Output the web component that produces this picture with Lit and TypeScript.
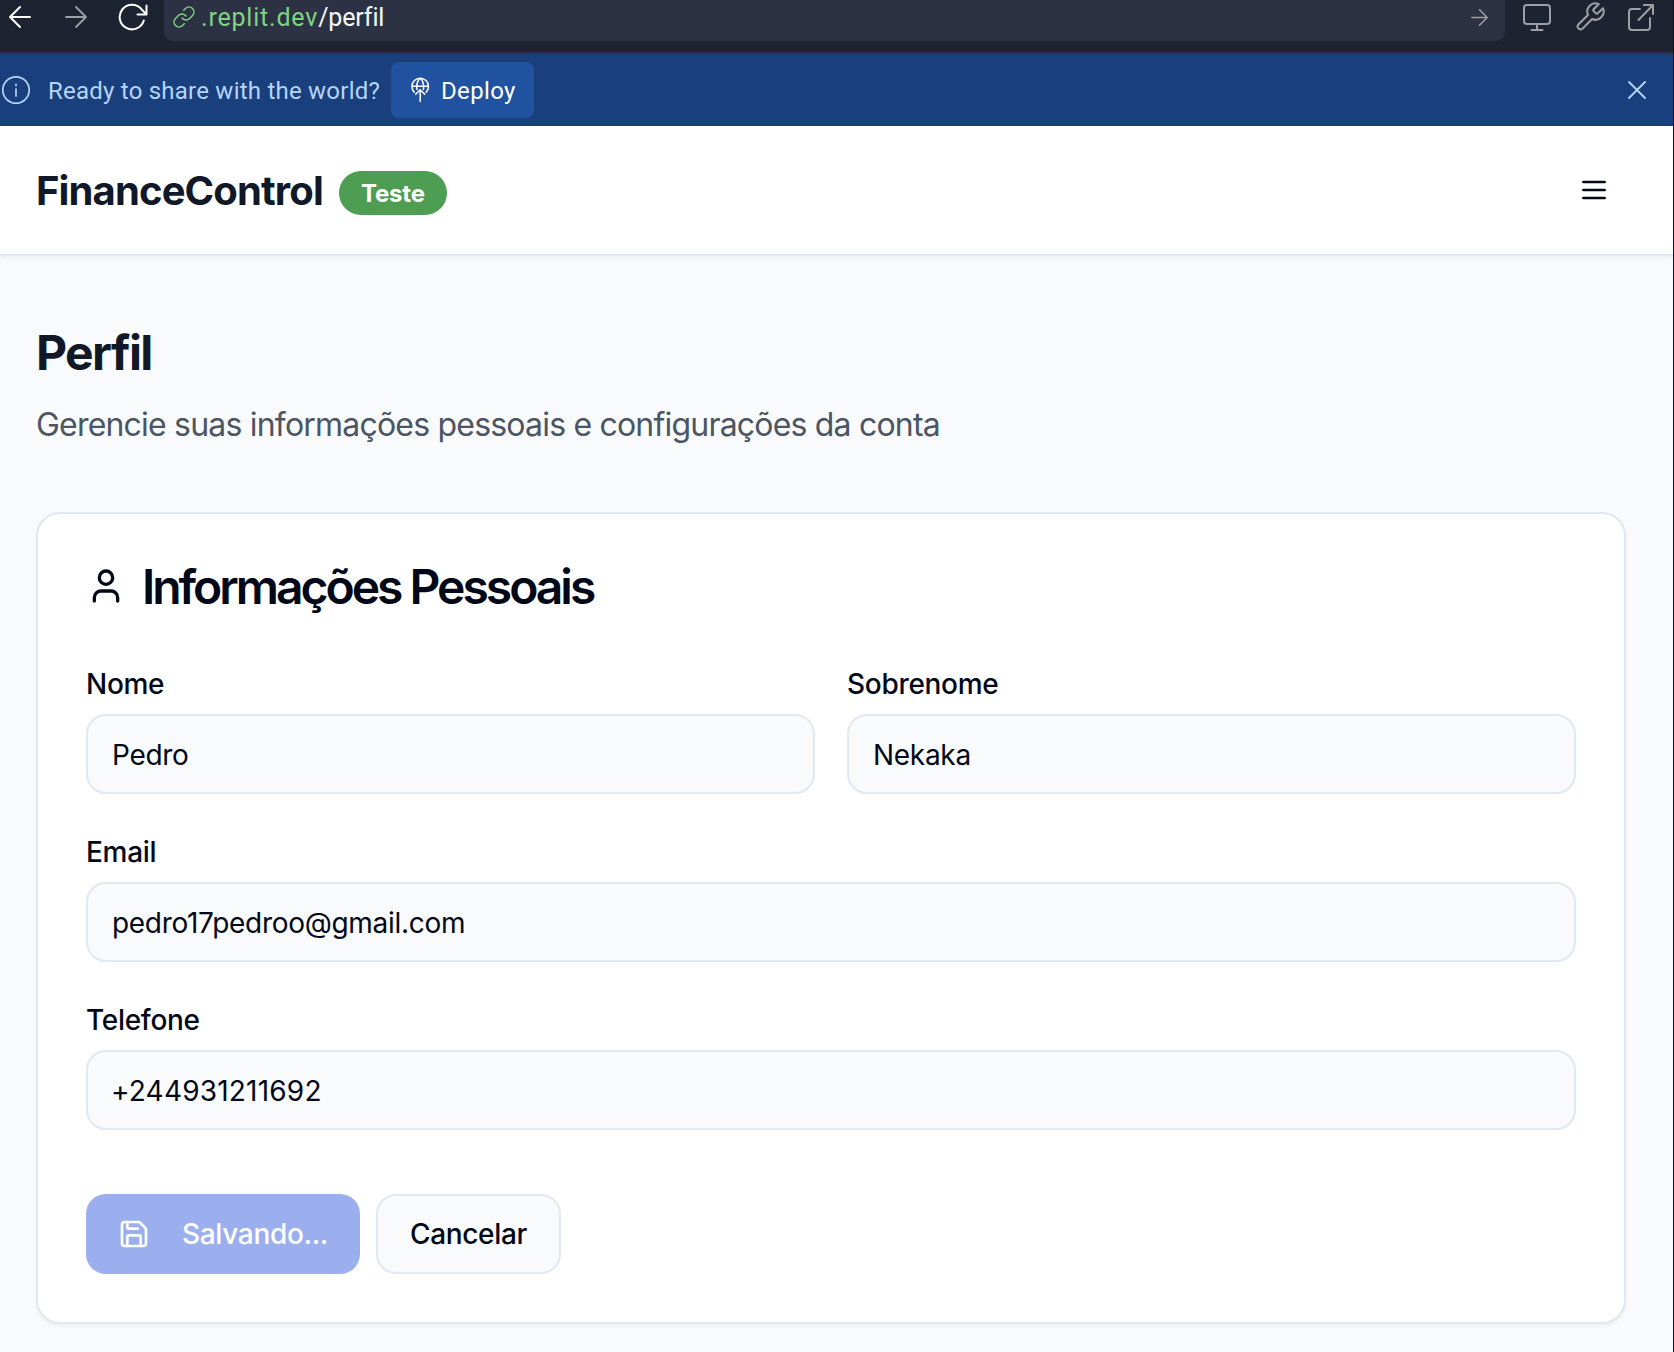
import { LitElement, html, css, svg } from "lit";
import { customElement, property } from "lit/decorators.js";

const icons: Record<string, unknown> = {
  back: svg`<path d="M22 12H2M12 2 2 12l10 10"/>`,
  forward: svg`<path d="M2 12h20M12 2l10 10-10 10"/>`,
  reload: svg`<path d="M25.8 18.500A12.300 12.300 0 1 1 23.500 7.200L28.500 12.500M28.500 3.500v9h-9"/>`,
  link: svg`<path d="M10 13a5 5 0 0 0 7.54.54l3-3a5 5 0 0 0-7.07-7.07l-1.72 1.71"/><path d="M14 11a5 5 0 0 0-7.54-.54l-3 3a5 5 0 0 0 7.07 7.07l1.71-1.71"/>`,
  monitor: svg`<rect x="1" y="2" width="26" height="19" rx="3"/><path d="M14 21v6M8.500 27h11"/>`,
  wrench: svg`<path d="M14.7 6.3a1 1 0 0 0 0 1.4l1.6 1.6a1 1 0 0 0 1.4 0l3.77-3.77a6 6 0 0 1-7.94 7.94l-6.91 6.91a2.12 2.12 0 0 1-3-3l6.91-6.91a6 6 0 0 1 7.94-7.94l-3.76 3.76z"/>`,
  external: svg`<path d="M13 6H5a3 3 0 0 0-3 3v15a3 3 0 0 0 3 3h15a3 3 0 0 0 3-3v-9M11.500 17 26 2M17 2h9v9"/>`,
  info: svg`<circle cx="14" cy="14" r="13.2"/><path d="M14 13v7"/><path d="M14 8.4v1.2"/>`,
  deploy: svg`<path d="M3.200 15.200A8.300 8.300 0 1 1 15.200 15.200M1 9.300h16.500M6 12.500C5.200 7.500 6.800 3.500 9.200 1C11.600 3.500 13.200 7.500 12.400 12.500M9.200 24.500V12.700M4.700 17.200l4.500-4.500 4.500 4.500"/>`,
  close: svg`<path d="M1 1 17 17M17 1 1 17"/>`,
  menu: svg`<path d="M4 6h16M4 12h16M4 18h16"/>`,
  user: svg`<path d="M19 21v-2a4 4 0 0 0-4-4H9a4 4 0 0 0-4 4v2"/><circle cx="12" cy="7" r="4"/>`,
  save: svg`<path d="M15.2 3a2 2 0 0 1 1.400.6l3.800 3.800a2 2 0 0 1 .6 1.400V19a2 2 0 0 1-2 2H5a2 2 0 0 1-2-2V5a2 2 0 0 1 2-2z"/><path d="M17 21v-7a1 1 0 0 0-1-1H8a1 1 0 0 0-1 1v7M7 3v4a1 1 0 0 0 1 1h7"/>`,
};

const icon = (name: string, w: number, h: number, box: string, stroke: number) => html`
  <svg width=${w} height=${h} viewBox=${box} fill="none" stroke="currentColor"
    stroke-width=${stroke} stroke-linecap="round" stroke-linejoin="round">${icons[name]}</svg>`;

const base = css`
  * { box-sizing: border-box; }
  svg { display: block; flex: none; }
`;

@customElement("browser-bar")
class BrowserBar extends LitElement {
  static styles = [base, css`
    :host { display: block; font-family: Roboto, "Noto Sans", sans-serif; }
    .bar {
      display: flex; align-items: flex-start; height: 54px; padding: 0 19px 0 8px;
      background: #1e2331; border-bottom: 2px solid #2d3143; color: #9c9fa4;
    }
    .nav { display: flex; align-items: center; width: 156px; height: 34px; }
    .back { color: #fff; margin-right: 32px; }
    .reload { color: #fff; margin-left: 30px; }
    .address {
      display: flex; align-items: center; flex: 1; height: 41px; padding: 0 17px 7px 8px;
      background: #2d3144; border-radius: 0 0 9px 9px;
    }
    .chain { color: #7fd383; margin-right: 5px; }
    .url { flex: 1; padding-top: 2px; color: #f5f9fc; font-size: 25px; line-height: 34px; letter-spacing: -.15px; white-space: nowrap; }
    .host { color: #7fd383; letter-spacing: .8px; }
    .tools { display: flex; align-items: center; gap: 22px; height: 34px; margin-left: 18px; }
    .screen { margin-right: 2px; }
  `];
  render() {
    return html`<div class="bar">
      <div class="nav">
        <span class="back">${icon("back", 24, 24, "0 0 24 24", 2)}</span>
        ${icon("forward", 24, 24, "0 0 24 24", 1.8)}
        <span class="reload">${icon("reload", 30, 30, "0 0 30 30", 2)}</span>
      </div>
      <div class="address">
        <span class="chain">${icon("link", 24, 24, "0 0 24 24", 1.5)}</span>
        <div class="url"><span class="host">.replit.dev</span>/perfil</div>
        ${icon("forward", 17, 17, "1 1 22 22", 1.9)}
      </div>
      <div class="tools">
        <span class="screen">${icon("monitor", 28, 28, "0 0 28 28", 2)}</span>
        ${icon("wrench", 30, 30, "1 1 22 22", 1.5)}
        ${icon("external", 27, 28, "0 0 27 28", 2)}
      </div>
    </div>`;
  }
}

@customElement("deploy-banner")
class DeployBanner extends LitElement {
  static styles = [base, css`
    :host { display: block; font-family: Roboto, "Noto Sans", sans-serif; }
    .banner {
      display: flex; align-items: center; height: 72px; padding: 0 27px 0 2px;
      background: #193f7d; color: #b6d5fb; font-size: 24px;
    }
    .message { width: 331px; margin: 0 12px 0 18px; padding-top: 2px; letter-spacing: .23px; white-space: nowrap; }
    .deploy {
      display: flex; align-items: center; gap: 11px; width: 143px; height: 56px; padding: 0 0 0 20px;
      border: 0; border-radius: 8px; background: #2152a0; color: #fff; font: inherit; letter-spacing: .35px;
    }
    .deploy-text { padding-top: 2px; }
    .close { margin-left: auto; }
  `];
  render() {
    return html`<div class="banner">
      ${icon("info", 28, 28, "0 0 28 28", 1.7)}
      <span class="message">Ready to share with the world?</span>
      <button class="deploy">${icon("deploy", 19, 26, "0 0 19 26", 1.5)}<span class="deploy-text">Deploy</span></button>
      <span class="close">${icon("close", 18, 18, "0 0 18 18", 1.8)}</span>
    </div>`;
  }
}

@customElement("form-field")
class FormField extends LitElement {
  @property() label = "";
  @property() value = "";
  @property() type = "text";
  static styles = [base, css`
    :host { display: block; min-width: 0; }
    .field { display: flex; flex-direction: column; gap: 16px; }
    .label { font-size: 28px; line-height: 28px; font-weight: 500; letter-spacing: -.3px; }
    .input {
      width: 100%; height: 80px; padding: 2px 24px 0; border: 2px solid #e2e8f0; border-radius: 20px;
      background: #f9fafc; color: inherit; font: 400 28px/40px Inter, sans-serif; outline: none;
      letter-spacing: -.3px;
    }
    .input[type="tel"] { padding-left: 23px; letter-spacing: .2px; }
  `];
  render() {
    return html`<label class="field">
      <span class="label">${this.label}</span>
      <input class="input" type=${this.type} .value=${this.value} />
    </label>`;
  }
}

@customElement("app-root")
class AppRoot extends LitElement {
  static styles = [base, css`
    :host {
      display: block; height: 1352px; overflow: hidden; border-right: 1px solid #0e1220;
      background: #f9fafc; color: #020817; font-family: Inter, "Liberation Sans", sans-serif;
    }
    .header {
      display: flex; align-items: center; height: 130px; padding: 0 63px 0 36px;
      background: #fff; border-bottom: 2px solid #e2e8f0; box-shadow: 0 2px 4px rgba(0, 0, 0, .05);
    }
    .brand { padding-top: 2px; color: #111827; font-size: 40px; line-height: 56px; font-weight: 700; letter-spacing: -.87px; }
    .badge {
      display: flex; align-items: center; justify-content: center; width: 108px; height: 44px;
      margin: 6px 0 0 16px; border-radius: 22px; background: #4d9e53; color: #fff;
      font-size: 24px; font-weight: 700; letter-spacing: -.2px;
    }
    .menu { margin-left: auto; }
    .main { padding: 65px 47px 0 36px; }
    .title { margin: 0; color: #111827; font-size: 48px; line-height: 64px; font-weight: 700; letter-spacing: -1.6px; }
    .subtitle { margin: 16px 0 63px; color: #4b5563; font-size: 32px; line-height: 48px; letter-spacing: -.8px; }
    .card {
      height: 812px; padding: 48px; border: 2px solid #e2e8f0; border-radius: 24px; background: #fff;
      box-shadow: 0 2px 4px rgba(0, 0, 0, .05);
    }
    .heading {
      display: flex; align-items: center; gap: 16px; height: 48px; margin: 0 0 60px; font-size: 48px;
      line-height: 48px; font-weight: 600; letter-spacing: -3.02px; white-space: nowrap;
    }
    .heading-text { padding-top: 2px; }
    .form { display: grid; grid-template-columns: 1fr 1fr; gap: 44px 32px; }
    .wide { grid-column: 1 / -1; }
    .actions { display: flex; gap: 16px; margin-top: 64px; }
    .button {
      display: flex; align-items: center; justify-content: center; height: 80px; padding: 0;
      border-radius: 20px; font: 500 28px/40px Inter, sans-serif; letter-spacing: -.33px;
    }
    .save { gap: 32px; width: 274px; border: 0; background: #9bafef; color: #fff; }
    .cancel { width: 185px; border: 2px solid #e2e8f0; background: #f9fafc; color: #020817; }
  `];
  render() {
    return html`
      <browser-bar></browser-bar>
      <deploy-banner></deploy-banner>
      <header class="header">
        <span class="brand">FinanceControl</span>
        <span class="badge">Teste</span>
        <span class="menu">${icon("menu", 32, 32, "0 0 24 24", 2)}</span>
      </header>
      <main class="main">
        <h1 class="title">Perfil</h1>
        <p class="subtitle">Gerencie suas informações pessoais e configurações da conta</p>
        <section class="card">
          <h2 class="heading">${icon("user", 40, 40, "0 0 24 24", 2)}<span class="heading-text">Informações Pessoais</span></h2>
          <div class="form">
            <form-field label="Nome" value="Pedro"></form-field>
            <form-field label="Sobrenome" value="Nekaka"></form-field>
            <form-field class="wide" label="Email" value="pedro17pedroo@gmail.com"></form-field>
            <form-field class="wide" label="Telefone" type="tel" value="+244931211692"></form-field>
          </div>
          <div class="actions">
            <button class="button save">${icon("save", 32, 32, "0 0 24 24", 2)}<span>Salvando...</span></button>
            <button class="button cancel">Cancelar</button>
          </div>
        </section>
      </main>`;
  }
}
